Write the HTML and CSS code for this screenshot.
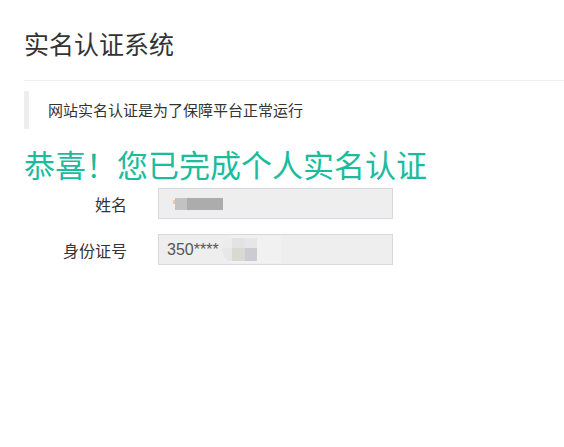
FILE: index.html
```html
<!DOCTYPE html>
<html lang="zh-CN">
<head>
<meta charset="utf-8">
<title>实名认证系统</title>
<link rel="stylesheet" href="styles.css">
</head>
<body>
<div class="page">
  <div class="header">
    <h1 class="title">实名认证系统</h1>
  </div>
  <div class="quote">网站实名认证是为了保障平台正常运行</div>
  <h2 class="success">恭喜！您已完成个人实名认证</h2>
  <div class="form">
    <div class="row">
      <label class="label">姓名</label>
      <div class="field">
        <span class="dot"></span>
        <span class="blk blk-a"></span>
        <span class="blk blk-b"></span>
      </div>
    </div>
    <div class="row">
      <label class="label">身份证号</label>
      <div class="field">
        <span class="val">350****</span>
        <span class="blob">
          <span class="cell c1"><i class="top t1"></i><i class="bot b1"></i></span>
          <span class="cell c2"><i class="top t2"></i><i class="bot b2"></i></span>
          <span class="cell c3"><i class="top t3"></i><i class="bot b3"></i></span>
        </span>
      </div>
    </div>
  </div>
</div>
</body>
</html>
```
FILE: styles.css
```css
html, body {
  margin: 0;
  padding: 0;
  background: #fff;
}
body {
  font-family: "Noto Sans CJK SC", "Noto Sans", sans-serif;
  color: #333;
}
.page {
  padding-left: 24px;
}
.header {
  padding-top: 31px;
  padding-bottom: 24px;
  border-bottom: 1px solid #eeeeee;
}
.title {
  margin: 0;
  font-size: 25px;
  line-height: 25px;
  font-weight: normal;
  color: #333;
}
.quote {
  margin-top: 10px;
  height: 38px;
  line-height: 38px;
  border-left: 5px solid #eeeeee;
  padding-left: 19px;
  font-size: 15px;
  color: #333;
}
.success {
  margin: 19px 0 0 0;
  font-size: 31px;
  line-height: 31px;
  font-weight: normal;
  color: #1abc9c;
}
.form {
  margin-top: 9px;
  display: flex;
  flex-direction: column;
  gap: 15px;
}
.row {
  display: flex;
  align-items: center;
  gap: 31px;
}
.label {
  width: 103px;
  margin-left: -24px;
  padding-left: 24px;
  box-sizing: content-box;
  text-align: right;
  font-size: 16px;
  line-height: 20px;
  color: #333;
}
.field {
  width: 225px;
  height: 29px;
  border: 1px solid #d6d9e0;
  background: #eeeeee;
  display: flex;
  align-items: center;
  padding-left: 8px;
  box-sizing: content-box;
  overflow: hidden;
}
.dot {
  width: 2px;
  height: 4px;
  margin-left: 6px;
  background: #e8c9b0;
  align-self: center;
  margin-top: -4px;
}
.blk {
  height: 12px;
}
.blk-a {
  width: 12px;
  background: #c2c2c2;
}
.blk-b {
  width: 36px;
  background: #acacac;
}
.val {
  font-family: "Liberation Sans", "Noto Sans", sans-serif;
  font-size: 16px;
  color: #555;
  line-height: 20px;
}
.blob {
  display: flex;
  height: 27px;
  width: 59px;
  margin-left: 3px;
  background: #f1f1f1;
  border-radius: 14px 0 0 14px;
  overflow: hidden;
}
.cell {
  display: flex;
  flex-direction: column;
  height: 27px;
  padding-top: 2px;
  box-sizing: border-box;
}
.cell i {
  display: block;
}
.c1 { width: 10px; }
.c2 { width: 13px; }
.c3 { width: 12px; }
.top { height: 10px; }
.bot { height: 13px; }
.t1 { background: #ececec; }
.b1 { background: #e7e7e7; }
.t2 { background: #e3e3e3; }
.b2 { background: #dad8d3; }
.t3 { background: #e6e6e8; }
.b3 { background: #cbccd2; }
```
